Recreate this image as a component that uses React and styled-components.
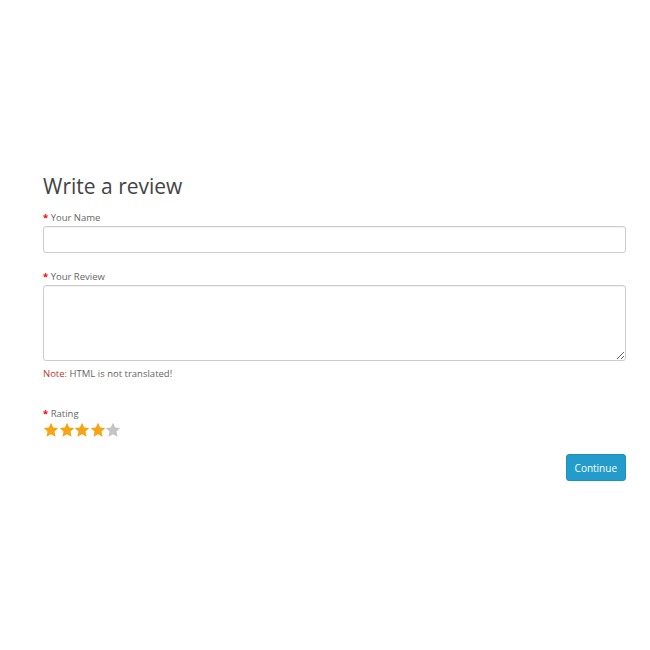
import React from 'react'
import styled, { createGlobalStyle } from 'styled-components'

const GlobalStyle = createGlobalStyle`
  body {
    margin: 0;
    background: #fff;
    font-family: "Open Sans", "Liberation Sans", sans-serif;
    color: #666;
  }
`

const Wrapper = styled.div`
  padding: 172px 24px 0 43px;
  width: 583px;
`

const Title = styled.h2`
  margin: 0 0 11px 0;
  font-size: 21px;
  font-weight: 400;
  line-height: 28px;
  color: #444;
`

const Field = styled.div`
  margin-bottom: ${props => props.gap || 0}px;
`

const Label = styled.label`
  display: block;
  font-size: 9.5px;
  line-height: 13px;
  color: #666;
  margin-bottom: 2px;

  &:before {
    content: '* ';
    color: #f00;
    font-weight: bold;
  }
`

const Input = styled.input`
  box-sizing: border-box;
  display: block;
  width: 100%;
  height: 27px;
  border: 1px solid #ccc;
  border-radius: 3px;
  box-shadow: inset 0 1px 1px rgba(0, 0, 0, 0.06);
  background: #fff;
`

const TextArea = styled.textarea`
  box-sizing: border-box;
  display: block;
  width: 100%;
  height: 76px;
  border: 1px solid #ccc;
  border-radius: 3px;
  box-shadow: inset 0 1px 1px rgba(0, 0, 0, 0.06);
  background: #fff;
`

const Note = styled.div`
  margin-top: 6px;
  font-size: 9.5px;
  line-height: 13px;
  color: #666;

  span {
    color: #c0392b;
  }
`

const Stars = styled.div`
  display: flex;
`

const Star = styled.svg`
  width: 16px;
  height: 16px;
  margin-right: -0.5px;
  fill: ${props => (props.on ? '#f5a416' : '#c4c4c4')};
`

const Buttons = styled.div`
  display: flex;
  justify-content: flex-end;
  margin-top: 16px;
`

const Button = styled.button`
  height: 27px;
  padding: 0 8px;
  border: 1px solid #1f8fbd;
  border-radius: 3px;
  background: #239bcb;
  color: #fff;
  font-family: "Open Sans", "Liberation Sans", sans-serif;
  font-size: 10px;
  cursor: pointer;
`

const starPath = 'M8 0.8l2.2 4.7 5.1 0.6-3.8 3.5 1 5.1L8 12.2 3.5 14.7l1-5.1L0.7 6.1l5.1-0.6z'

const App = () => {
  const rating = 4
  return (
    <>
      <GlobalStyle />
      <Wrapper>
        <Title>Write a review</Title>
        <Field gap={17}>
          <Label>Your Name</Label>
          <Input type="text" />
        </Field>
        <Field gap={27}>
          <Label>Your Review</Label>
          <TextArea />
          <Note><span>Note:</span> HTML is not translated!</Note>
        </Field>
        <Field>
          <Label>Rating</Label>
          <Stars>
            {[1, 2, 3, 4, 5].map(n => (
              <Star key={n} on={n <= rating ? 1 : 0} viewBox="0 0 16 16">
                <path d={starPath} />
              </Star>
            ))}
          </Stars>
        </Field>
        <Buttons>
          <Button type="button">Continue</Button>
        </Buttons>
      </Wrapper>
    </>
  )
}

export default App
